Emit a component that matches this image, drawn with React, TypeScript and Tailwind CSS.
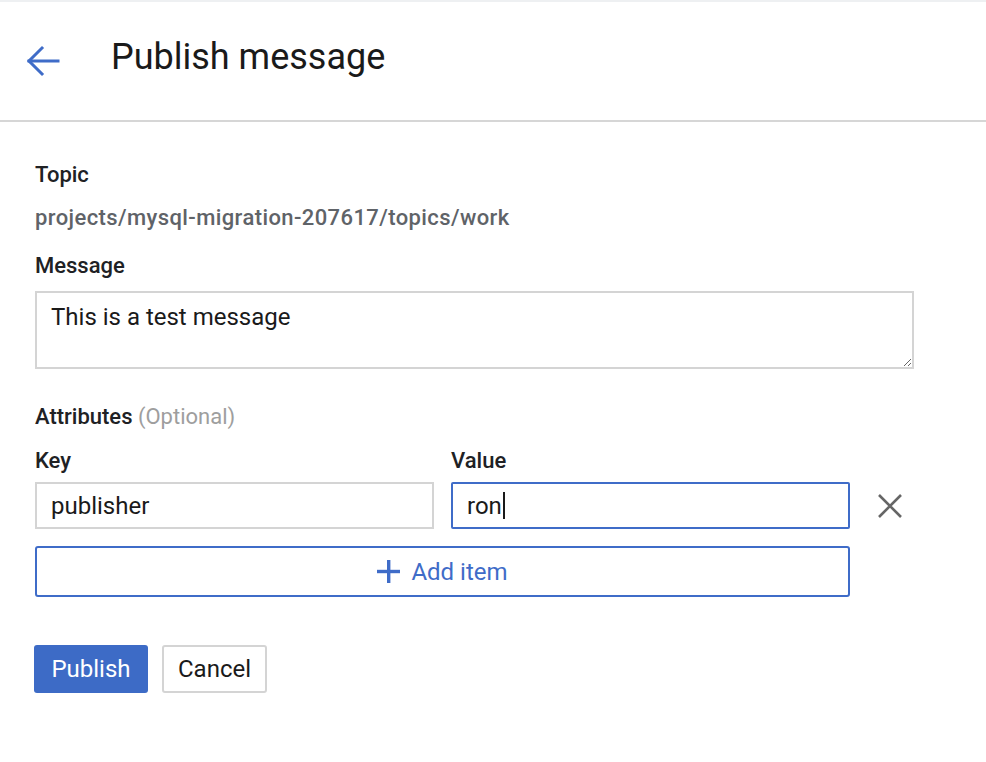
import { useState } from "react";

export default function App() {
  const [message, setMessage] = useState("This is a test message");
  const [attrs, setAttrs] = useState([{ key: "publisher", value: "ron" }]);

  const font = { fontFamily: "Roboto, 'Liberation Sans', sans-serif" };

  return (
    <div className="min-h-screen w-[986px] bg-white text-[#202124]" style={font}>
      {/* Header */}
      <div className="h-[122px] border-t-2 border-t-[#eef0f2] border-b-2 border-b-[#d6d6d6] flex items-center">
        <button className="ml-[26px] w-[34px] h-[34px] flex items-center justify-center">
          <svg width="34" height="32" viewBox="0 0 34 32" fill="none" stroke="#3f6cc8" strokeWidth="3" strokeLinecap="square">
            <path d="M3 16 H32" />
            <path d="M16 3 L3 16 L16 29" />
          </svg>
        </button>
        <h1 className="ml-[51px] text-[36px] leading-none text-[#1a1a1a] -mt-[8px]">Publish message</h1>
      </div>

      {/* Form */}
      <div className="pl-[35px] pt-[38px]">
        <div className="text-[22px] font-medium leading-[30px]">Topic</div>
        <div className="mt-[13px] text-[22px] tracking-[0.4px] font-medium leading-[30px] text-[#5f6368]">
          projects/mysql-migration-207617/topics/work
        </div>

        <div className="mt-[18px] text-[22px] font-medium leading-[30px]">Message</div>
        <textarea
          value={message}
          onChange={(e) => setMessage(e.target.value)}
          className="mt-[10px] block w-[879px] h-[78px] border-2 border-[#d4d4d4] px-[14px] pt-[9px] text-[24px] leading-[30px] text-[#1a1a1a] outline-none resize-y"
          style={font}
        />

        <div className="mt-[33px] text-[22px] font-medium leading-[30px]">
          Attributes <span className="font-normal text-[#9e9e9e]">(Optional)</span>
        </div>

        {attrs.map((a, i) => (
          <div key={i} className="mt-[14px]">
            <div className="flex gap-[17px]">
              <div className="w-[399px] text-[22px] font-medium leading-[30px]">Key</div>
              <div className="w-[399px] text-[22px] font-medium leading-[30px]">Value</div>
            </div>
            <div className="mt-[6px] flex items-center gap-[17px]">
              <input
                value={a.key}
                onChange={(e) => setAttrs(attrs.map((x, j) => (j === i ? { ...x, key: e.target.value } : x)))}
                className="w-[399px] h-[47px] border-2 border-[#d4d4d4] px-[14px] text-[24px] text-[#1a1a1a] outline-none"
                style={font}
              />
              <div className="w-[399px] h-[47px] border-2 border-[#3f6cc8] rounded-[2px] px-[14px] flex items-center text-[24px] text-[#1a1a1a]">
                {a.value}
                <span className="w-[2px] h-[27px] bg-[#1a1a1a] ml-[1px]" />
              </div>
              <button
                className="ml-[8px] w-[30px] h-[30px] flex items-center justify-center"
                onClick={() => setAttrs(attrs.filter((_, j) => j !== i))}
              >
                <svg width="26" height="26" viewBox="0 0 26 26" stroke="#666" strokeWidth="2.6">
                  <path d="M2 2 L24 24 M24 2 L2 24" />
                </svg>
              </button>
            </div>
          </div>
        ))}

        <button
          onClick={() => setAttrs([...attrs, { key: "", value: "" }])}
          className="mt-[17px] w-[815px] h-[51px] border-2 border-[#3f6cc8] rounded-[3px] flex items-center justify-center gap-[11px] text-[24px] text-[#3f6cc8]"
        >
          <svg width="23" height="23" viewBox="0 0 23 23" fill="#3f6cc8">
            <rect x="10" y="0" width="3.4" height="23" />
            <rect x="0" y="9.8" width="23" height="3.4" />
          </svg>
          Add item
        </button>

        <div className="mt-[48px] -ml-[1px] flex gap-[14px]">
          <button className="w-[114px] h-[48px] bg-[#3d6bc6] rounded-[3px] text-white text-[24px]">Publish</button>
          <button className="w-[105px] h-[48px] border-2 border-[#d4d4d4] rounded-[3px] bg-white text-[#1a1a1a] text-[24px]">Cancel</button>
        </div>
      </div>
    </div>
  );
}
